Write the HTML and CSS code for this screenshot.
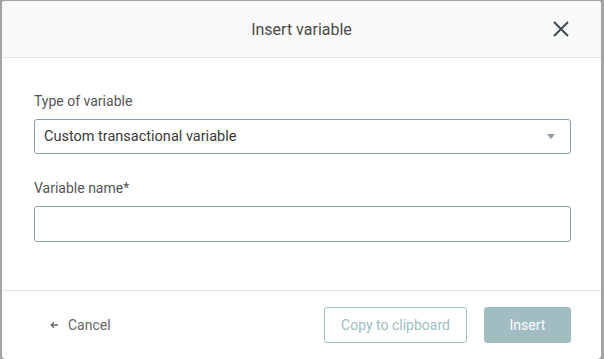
FILE: index.html
```html
<!DOCTYPE html>
<html lang="en">
<head>
  <meta charset="UTF-8">
  <title>Insert variable</title>
  <link rel="stylesheet" href="styles.css">
</head>
<body>
  <div class="modal">
    <div class="modal-header">
      <h1>Insert variable</h1>
      <button class="close" aria-label="Close">
        <svg width="18" height="18" viewBox="0 0 18 18">
          <path d="M2 2 L16 16 M16 2 L2 16" stroke="#3f4b53" stroke-width="2" fill="none"/>
        </svg>
      </button>
    </div>

    <div class="modal-body">
      <label class="field-label">Type of variable</label>
      <div class="select">
        <span>Custom transactional variable</span>
        <span class="caret"></span>
      </div>

      <label class="field-label">Variable name*</label>
      <div class="input"></div>
    </div>

    <div class="modal-footer">
      <a class="cancel">
        <svg class="arrow" width="8" height="8" viewBox="0 0 8 8">
          <path d="M8 4 H1.5 M4 1.2 L1.2 4 L4 6.8" stroke="#666" stroke-width="1.3" fill="none"/>
        </svg>
        Cancel
      </a>
      <div class="actions">
        <button class="btn btn-outline">Copy to clipboard</button>
        <button class="btn btn-primary">Insert</button>
      </div>
    </div>
  </div>
</body>
</html>
```

FILE: styles.css
```css
html, body {
  height: 100%;
}

body {
  margin: 0;
  background: #a3a3a3;
  font-family: Roboto, 'Liberation Sans', sans-serif;
  box-sizing: border-box;
  padding: 1px 3px 0 2px;
}

.modal {
  background: #fff;
  height: 100%;
  border-radius: 3px 3px 4px 4px;
  display: flex;
  flex-direction: column;
}

.modal-header {
  height: 56px;
  background: #fafafa;
  border-bottom: 1px solid #e2e2e2;
  border-radius: 3px 3px 0 0;
  display: flex;
  align-items: center;
  justify-content: center;
  position: relative;
}

.modal-header h1 {
  margin: 0;
  font-size: 16px;
  font-weight: 400;
  color: #4a4a4a;
}

.close {
  position: absolute;
  right: 31px;
  top: 19px;
  border: none;
  background: none;
  padding: 0;
  width: 18px;
  height: 18px;
}

.modal-body {
  box-sizing: border-box;
  padding: 35px 30px 0 32px;
  height: 233px;
  border-bottom: 1px solid #e2e2e2;
}

.field-label {
  display: block;
  font-size: 14px;
  line-height: 16px;
  color: #555;
  margin-bottom: 10px;
}

.select, .input {
  border: 1px solid #8a9ca6;
  border-radius: 3px;
}

.select {
  height: 33px;
  display: flex;
  align-items: center;
  justify-content: space-between;
  padding: 0 15px 0 9px;
  font-size: 14.5px;
  color: #3a3a3a;
  margin-bottom: 26px;
}

.input {
  height: 34px;
}

.caret {
  width: 0;
  height: 0;
  border-left: 4px solid transparent;
  border-right: 4px solid transparent;
  border-top: 5px solid #8c9ca6;
}

.modal-footer {
  flex: 1;
  display: flex;
  align-items: center;
  justify-content: space-between;
  padding: 0 30px 0 48px;
}

.cancel {
  font-size: 14px;
  color: #666;
  display: flex;
  align-items: center;
  gap: 10px;
}

.actions {
  display: flex;
  gap: 17px;
}

.btn {
  height: 36px;
  font-family: inherit;
  font-size: 14px;
  border-radius: 3px;
  padding: 0;
}

.btn-outline {
  width: 143px;
  background: #fff;
  border: 1px solid #9fc0c5;
  color: #9dbdc2;
}

.btn-primary {
  width: 87px;
  background: #a1bdc2;
  border: 1px solid #a1bdc2;
  color: #fff;
}
```
